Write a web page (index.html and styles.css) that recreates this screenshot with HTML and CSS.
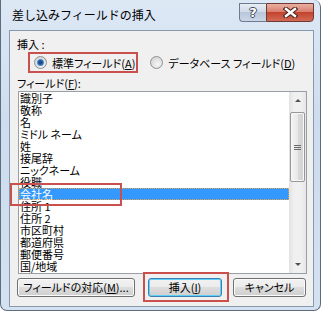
FILE: index.html
```html
<!DOCTYPE html>
<html lang="ja">
<head>
    <meta charset="UTF-8">
    <title>差し込みフィールドの挿入</title>
    <link rel="stylesheet" href="styles.css">
</head>
<body>
    <div class="window">
        <div class="titlebar">
            <span class="title">差し込みフィールドの挿入</span>
            <div class="caption-buttons">
                <span class="cap help">?</span>
                <span class="cap close">
                    <svg width="15" height="11" viewBox="0 0 15 11">
                        <path d="M3 2 L12 9 M12 2 L3 9" stroke="#4b2620" stroke-width="4.6" stroke-linecap="square"/>
                        <path d="M3 2 L12 9 M12 2 L3 9" stroke="#ffffff" stroke-width="2.4" stroke-linecap="square"/>
                    </svg>
                </span>
            </div>
        </div>

        <div class="client">
            <div class="label ins">挿入 :</div>
            <div class="radios">
                <label class="radio mark"><span class="dot checked"></span>標準フィールド(<u>A</u>)</label>
                <label class="radio"><span class="dot"></span>データベース フィールド(<u>D</u>)</label>
            </div>
            <div class="label fields">フィールド(<u>F</u>):</div>

            <div class="listbox">
                <ul class="items">
                    <li>識別子</li>
                    <li>敬称</li>
                    <li>名</li>
                    <li>ミドル ネーム</li>
                    <li>姓</li>
                    <li>接尾辞</li>
                    <li>ニックネーム</li>
                    <li>役職</li>
                    <li class="selected">会社名</li>
                    <li>住所 1</li>
                    <li>住所 2</li>
                    <li>市区町村</li>
                    <li>都道府県</li>
                    <li>郵便番号</li>
                    <li>国/地域</li>
                </ul>
                <div class="scrollbar">
                    <div class="arrow"><span class="tri up"></span></div>
                    <div class="track">
                        <div class="thumb"><span class="grip"></span></div>
                    </div>
                    <div class="arrow"><span class="tri down"></span></div>
                </div>
                <div class="callout row-mark"></div>
            </div>

            <div class="buttons">
                <button class="btn map">フィールドの対応(<u>M</u>)...</button>
                <div class="btn-wrap">
                    <button class="btn insert default">挿入(<u>I</u>)</button>
                    <div class="callout btn-mark"></div>
                </div>
                <button class="btn cancel">キャンセル</button>
            </div>
        </div>
    </div>
</body>
</html>
```

FILE: styles.css
```css
body {
    margin: 0;
    background-color: #ffffff;
    font-family: "Noto Sans CJK JP", "Liberation Sans", sans-serif;
    font-size: 11px;
    font-feature-settings: "palt";
    color: #000000;
}

/* Window frame */
.window {
    width: 321px;
    height: 311px;
    box-sizing: border-box;
    border: 1px solid #5d6c7f;
    border-top: none;
    border-radius: 0 7px 7px 7px;
    background: linear-gradient(#dde8f5, #cddcee 40%, #d3e1f1);
}

.titlebar {
    display: flex;
    height: 30px;
}

.title {
    margin: 8px 0 0 11px;
    font-size: 12px;
    font-feature-settings: normal;
    line-height: 14px;
    white-space: nowrap;
}

.caption-buttons {
    display: flex;
    margin: 3px 6px 0 auto;
}

.cap {
    display: flex;
    align-items: center;
    justify-content: center;
    height: 19px;
    box-sizing: border-box;
}

.help {
    width: 27px;
    border: 1px solid #6c7c90;
    border-right: none;
    border-radius: 0 0 0 4px;
    background: linear-gradient(#e9eef5, #d0dbe8 45%, #b8c7da 50%, #cbd7e6);
    color: #ffffff;
    font: bold 13px "DejaVu Sans", sans-serif;
    text-shadow: 1px 0 #3d4959, -1px 0 #3d4959, 0 1px #3d4959, 0 -1px #3d4959;
}

.close {
    width: 48px;
    border: 1px solid #6e3a33;
    border-radius: 0 0 4px 0;
    background: linear-gradient(#eab0a2, #d9806f 45%, #c5432e 50%, #d06a56);
}

/* Client area */
.client {
    margin: 0 6px 0 8px;
    height: 277px;
    box-sizing: border-box;
    border: 1px solid #8799ae;
    background-color: #f0f0f0;
}

.label {
    line-height: 14px;
    margin-left: 7px;
}

.ins {
    margin-top: 6px;
}

.radios {
    display: flex;
    margin: 1px 0 0 18px;
}

.radio {
    display: flex;
    align-items: center;
    line-height: 12px;
    padding: 2px 1px 2px 4px;
    border: 2px solid transparent;
    white-space: nowrap;
}

.radio + .radio {
    margin-left: 6px;
}

.mark {
    border-color: #c9504c;
}

.dot {
    position: relative;
    width: 13px;
    height: 13px;
    box-sizing: border-box;
    margin-right: 5px;
    border: 1px solid #8e8f8f;
    border-radius: 50%;
    background: radial-gradient(circle at 60% 65%, #f6f6f6, #d4d4d4 80%);
}

.dot.checked::after {
    content: "";
    position: absolute;
    left: 2px;
    top: 2px;
    width: 7px;
    height: 7px;
    border-radius: 50%;
    background: radial-gradient(circle at 50% 50%, #1c4c8a 30%, #3a7ac0 55%, #a9d3f3 100%);
}

.fields {
    margin-top: 3px;
}

/* List box */
.listbox {
    position: relative;
    display: flex;
    width: 289px;
    height: 183px;
    box-sizing: border-box;
    margin: 1px 0 0 8px;
    border: 1px solid #9a9ea5;
    background-color: #ffffff;
}

.items {
    flex: 1;
    margin: 0;
    padding: 0;
    list-style: none;
    line-height: 12px;
}

.items li {
    height: 12px;
    padding-left: 1px;
    white-space: nowrap;
}

.items li.selected {
    background-color: #3399ff;
    color: #ffffff;
    outline: 1px dotted #e8a04a;
    outline-offset: -1px;
}

.scrollbar {
    display: flex;
    flex-direction: column;
    width: 17px;
    background: linear-gradient(90deg, #e2e2e2, #f0f0f0 30%, #f0f0f0 70%, #e6e6e6);
}

.arrow {
    display: flex;
    align-items: center;
    justify-content: center;
    height: 17px;
}

.tri {
    width: 0;
    height: 0;
    border-left: 3px solid transparent;
    border-right: 3px solid transparent;
}

.tri.up {
    border-bottom: 3px solid #505050;
}

.tri.down {
    border-top: 3px solid #505050;
}

.track {
    flex: 1;
}

.thumb {
    display: flex;
    align-items: center;
    justify-content: center;
    height: 70px;
    margin: 3px 1px 0 1px;
    box-sizing: border-box;
    border: 1px solid #979797;
    border-radius: 2px;
    background: linear-gradient(90deg, #f4f4f4, #e9e9e9 50%, #dadada 50%, #d2d2d2);
    box-shadow: inset 0 0 0 1px #f8f8f8;
}

.grip {
    width: 7px;
    height: 5px;
    background: linear-gradient(#6a6a6a 1px, transparent 1px, transparent 2px, #6a6a6a 2px, #6a6a6a 3px, transparent 3px, transparent 4px, #6a6a6a 4px);
}

/* Red annotation boxes */
.callout {
    position: absolute;
    box-sizing: border-box;
    border: 2px solid #c9504c;
    pointer-events: none;
}

.row-mark {
    left: -9px;
    top: 91px;
    width: 112px;
    height: 23px;
}

/* Buttons */
.buttons {
    display: flex;
    margin: 4px 0 0 7px;
}

.btn {
    height: 19px;
    padding: 0;
    box-sizing: border-box;
    border: 1px solid #707070;
    border-radius: 3px;
    background: linear-gradient(#f2f2f2, #ebebeb 50%, #dddddd 50%, #cfcfcf);
    box-shadow: inset 0 0 0 1px #fbfbfb;
    font: inherit;
    line-height: 15px;
    color: #000000;
    white-space: nowrap;
}

.map {
    width: 118px;
}

.btn-wrap {
    position: relative;
    margin-left: 13px;
}

.insert {
    width: 74px;
}

.default {
    border-color: #3c7fb1;
    box-shadow: inset 0 0 0 1px #5fd0f7;
}

.btn-mark {
    left: -5px;
    top: -6px;
    right: -7px;
    bottom: -5px;
}

.cancel {
    width: 73px;
    margin-left: 11px;
}
```
